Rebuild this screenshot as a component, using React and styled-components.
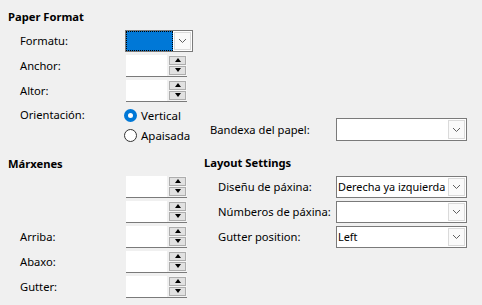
import styled, { createGlobalStyle } from "styled-components";

const GlobalStyle = createGlobalStyle`
  body {
    margin: 0;
    background: #f0f0f0;
    font-family: "Noto Sans", "Open Sans", sans-serif;
    font-size: 11.2px;
    color: #000;
  }
`;

function Chevron() {
  return (
    <svg width="9" height="6" viewBox="0 0 9 6">
      <polyline points="1,1 4.5,4.5 8,1" fill="none" stroke="#606060" strokeWidth="1" />
    </svg>
  );
}

function Combo({ width, height = 22, value, focused }) {
  return (
    <ComboBox $width={width} $height={height}>
      <ComboValue $focused={focused}>{value}</ComboValue>
      <DropButton>
        <Chevron />
      </DropButton>
    </ComboBox>
  );
}

function Spin() {
  return (
    <SpinBox>
      <SpinField />
      <SpinButtons>
        <SpinButton>
          <Arrow $up />
        </SpinButton>
        <SpinButton>
          <Arrow />
        </SpinButton>
      </SpinButtons>
    </SpinBox>
  );
}

function Radio({ checked, children }) {
  return (
    <RadioRow>
      <RadioDot $checked={checked} />
      <span>{children}</span>
    </RadioRow>
  );
}

export default function App() {
  return (
    <>
      <GlobalStyle />
      <Page>
        <Heading>Paper Format</Heading>
        <Rows>
          <Row>
            <Label>Formatu:</Label>
            <Combo width={68} focused />
          </Row>
          <Row>
            <Label>Anchor:</Label>
            <Spin />
          </Row>
          <Row>
            <Label>Altor:</Label>
            <Spin />
          </Row>
          <OrientRow>
            <Label>Orientación:</Label>
            <RadioGroup>
              <Radio checked>Vertical</Radio>
              <Radio>Apaisada</Radio>
            </RadioGroup>
            <TrayGroup>
              <TrayLabel>Bandexa del papel:</TrayLabel>
              <Combo width={131} height={23} />
            </TrayGroup>
          </OrientRow>
        </Rows>

        <Columns>
          <Column>
            <Heading>Márxenes</Heading>
            <Rows $top={2}>
              <Row>
                <Label />
                <Spin />
              </Row>
              <Row>
                <Label />
                <Spin />
              </Row>
              <Row>
                <Label>Arriba:</Label>
                <Spin />
              </Row>
              <Row>
                <Label>Abaxo:</Label>
                <Spin />
              </Row>
              <Row>
                <Label>Gutter:</Label>
                <Spin />
              </Row>
            </Rows>
          </Column>
          <Column $shift={-1}>
            <Heading>Layout Settings</Heading>
            <Rows $indent={14} $labelWidth={118} $top={3}>
              <Row>
                <Label>Diseñu de páxina:</Label>
                <Combo width={131} value="Derecha ya izquierda" />
              </Row>
              <Row>
                <Label>Númberos de páxina:</Label>
                <Combo width={131} />
              </Row>
              <Row>
                <Label>Gutter position:</Label>
                <Combo width={131} value="Left" />
              </Row>
            </Rows>
          </Column>
        </Columns>
      </Page>
    </>
  );
}

const Page = styled.div`
  width: 482px;
  height: 305px;
  box-sizing: border-box;
  padding: 9px 0 0 8px;
  overflow: hidden;
`;

const Heading = styled.div`
  font-weight: bold;
  line-height: 16px;
  height: 16px;
`;

const Rows = styled.div`
  display: grid;
  grid-template-columns: ${(p) => p.$labelWidth || 105}px auto;
  padding-left: ${(p) => p.$indent || 12}px;
  margin-top: ${(p) => (p.$top === undefined ? 3 : p.$top)}px;
`;

const Row = styled.div`
  display: contents;
  & > * {
    height: 25px;
  }
`;

const Label = styled.div`
  display: flex;
  align-items: center;
  line-height: 16px;
  white-space: nowrap;
`;

const ComboBox = styled.div`
  align-self: center;
  width: ${(p) => p.$width}px;
  height: ${(p) => p.$height}px !important;
  box-sizing: border-box;
  border: 1px solid #7a7a7a;
  background: #fff;
  display: flex;
`;

const ComboValue = styled.div`
  flex: 1;
  min-width: 0;
  display: flex;
  align-items: center;
  padding-left: 1px;
  font-size: 10.9px;
  white-space: nowrap;
  overflow: hidden;
  background: ${(p) => (p.$focused ? "#0078d7" : "transparent")};
  border: ${(p) => (p.$focused ? "1px dotted #000" : "none")};
`;

const DropButton = styled.div`
  width: 15px;
  flex-shrink: 0;
  margin: 1px;
  border: 1px solid #dadada;
  background: #fafafa;
  display: flex;
  align-items: center;
  justify-content: center;
`;

const SpinBox = styled.div`
  align-self: center;
  width: 61px;
  height: 22px !important;
  box-sizing: border-box;
  margin-left: 1px;
  display: flex;
  border-bottom: 1px solid #7a7a7a;
`;

const SpinField = styled.div`
  flex: 1;
  background: #fff;
  margin-right: 2px;
`;

const SpinButtons = styled.div`
  width: 17px;
  display: flex;
  flex-direction: column;
  gap: 1px;
  padding: 1px 1px 1px 0;
  background: #f5f5f5;
`;

const SpinButton = styled.div`
  flex: 1;
  border: 1px solid #adadad;
  background: #e1e1e1;
  display: flex;
  align-items: center;
  justify-content: center;
`;

const Arrow = styled.span`
  width: 0;
  height: 0;
  border-left: 3.5px solid transparent;
  border-right: 3.5px solid transparent;
  ${(p) => (p.$up ? "border-bottom: 4px solid #000;" : "border-top: 4px solid #000;")}
`;

const OrientRow = styled.div`
  grid-column: 1 / -1;
  display: grid;
  grid-template-columns: 105px 85px auto;
  margin-top: 2px;
  & > ${Label} {
    height: 20px;
  }
`;

const RadioGroup = styled.div`
  display: flex;
  flex-direction: column;
`;

const RadioRow = styled.div`
  display: flex;
  align-items: center;
  gap: 4px;
  height: 20px;
  font-size: 11.5px;
`;

const RadioDot = styled.span`
  width: 13px;
  height: 13px;
  box-sizing: border-box;
  border-radius: 50%;
  flex-shrink: 0;
  margin-left: -1px;
  background: #fff;
  border: ${(p) => (p.$checked ? "4px solid #0078d7" : "1px solid #333")};
  ${(p) => (p.$checked ? "box-shadow: inset 0 0 0 3px #fff;" : "")}
`;

const TrayGroup = styled.div`
  align-self: end;
  display: flex;
  align-items: center;
  margin-bottom: 4px;
`;

const TrayLabel = styled.div`
  width: 126px;
  white-space: nowrap;
`;

const Columns = styled.div`
  display: grid;
  grid-template-columns: 196px auto;
  margin-top: 11px;
`;

const Column = styled.div`
  display: flex;
  flex-direction: column;
  margin-top: ${(p) => p.$shift || 0}px;
`;
